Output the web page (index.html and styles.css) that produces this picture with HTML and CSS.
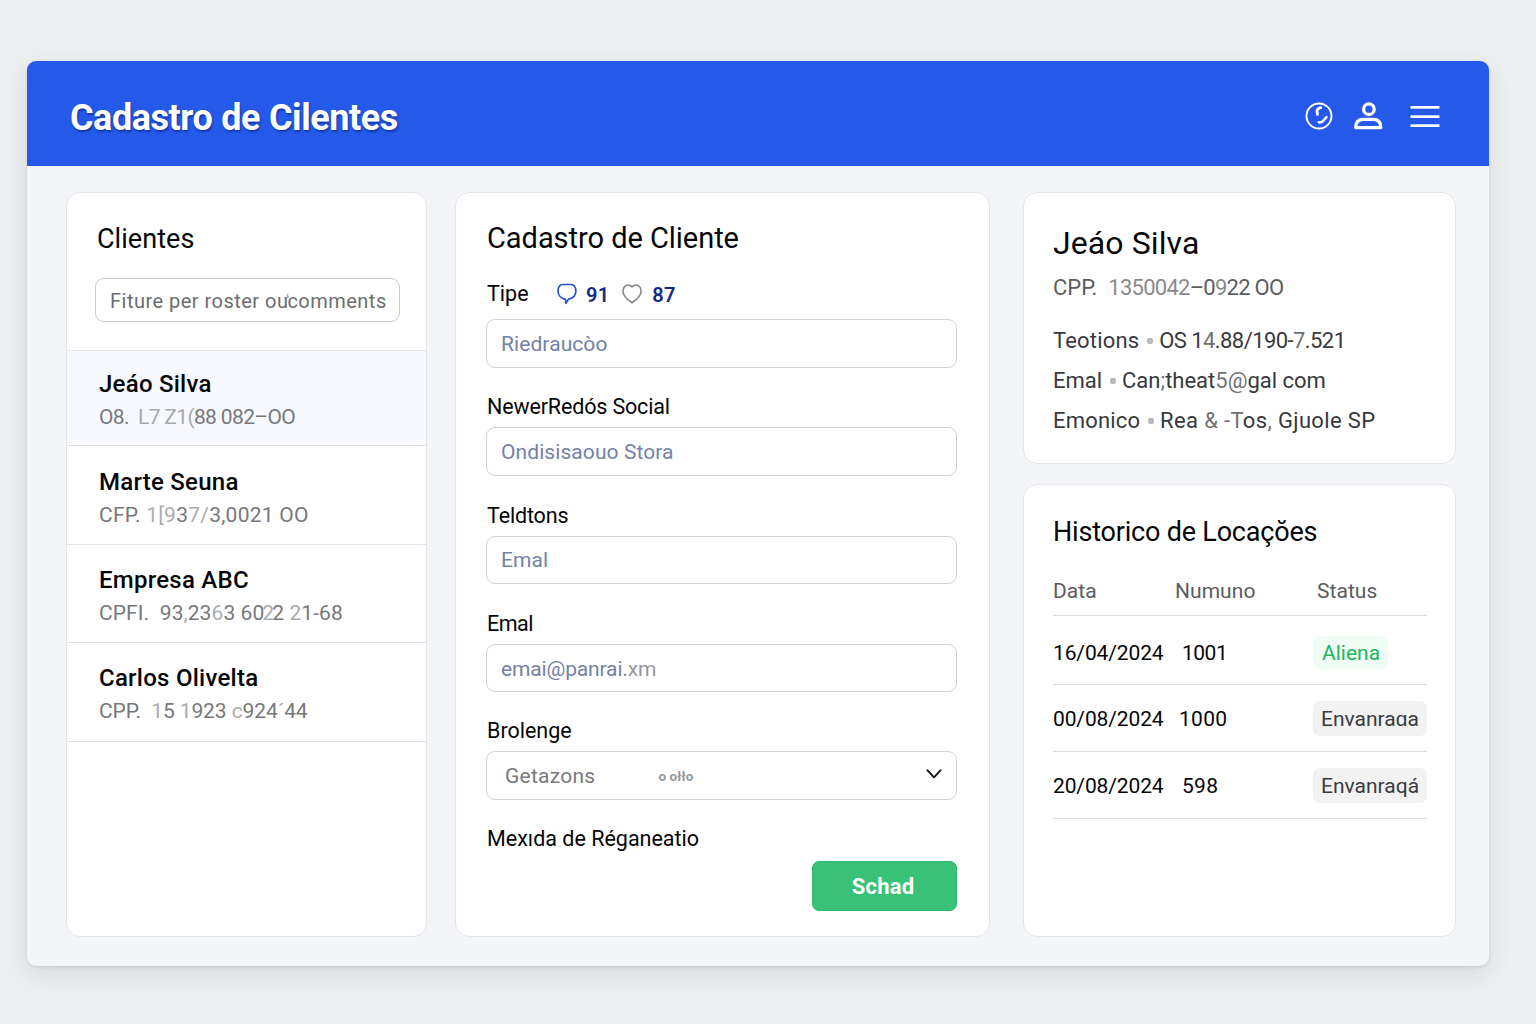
FILE: index.html
```html
<!DOCTYPE html>
<html lang="pt-BR">
<head>
<meta charset="utf-8">
<title>Cadastro de Cilentes</title>
<link rel="stylesheet" href="styles.css">
</head>
<body>
<div class="app">
  <header class="topbar">
    <h1 class="topbar-title">Cadastro de Cilentes</h1>
    <nav class="topbar-actions">
      <svg class="icon-clock" width="28" height="28" viewBox="0 0 28 28" fill="none" stroke="#fff" stroke-linecap="round" stroke-linejoin="round">
        <circle cx="14" cy="14" r="12.500" stroke-width="1.900"/>
        <path d="M15.600 5.700c-2.800.6-4 2.400-3.500 4.300l.4 2.300" stroke-width="2.900"/>
        <path d="M13.800 20.300c2.600.4 4.100-.7 5-2.200l2.700-3" stroke-width="2.500"/>
      </svg>
      <svg class="icon-user" width="29" height="28" viewBox="0 0 29 28" fill="none" stroke="#fff" stroke-width="3.300">
        <circle cx="14.900" cy="7.200" r="5.300"/>
        <path d="M1.700 25.600c0-5.200 2.800-8.200 7.600-8.200h9.900c4.800 0 7.600 3 7.600 8.200z" stroke-linejoin="round"/>
      </svg>
      <svg class="icon-menu" width="30" height="24" viewBox="0 0 30 24" fill="#fff">
        <rect x="0.500" y="1" width="29" height="2.700"/>
        <rect x="0.500" y="10.300" width="29" height="2.700"/>
        <rect x="0.500" y="19.300" width="29" height="2.700"/>
      </svg>
    </nav>
  </header>

  <main class="content">
    <section class="card clients">
      <h2 class="clients-title">Clientes</h2>
      <div class="search"><span>Fiture per roster ou<span class="faint tight">ʻ</span>comments</span></div>
      <ul class="client-list">
        <li class="client client--active">
          <strong>Jeáo Silva</strong>
          <span class="doc doc--narrow">O8.&nbsp; <span class="faint">L7 Z1(</span>88 082–OO</span>
        </li>
        <li class="client client--second">
          <strong>Marte Seuna</strong>
          <span class="doc doc--wide">CFP. <span class="faint">1[9</span>3<span class="faint">7/</span>3,0021 OO</span>
        </li>
        <li class="client client--third">
          <strong>Empresa ABC</strong>
          <span class="doc doc--company">CPFI.&nbsp; 93<span class="faint">,</span>23<span class="faint">6</span>3 60<span class="faint overlap">2</span>2 <span class="faint">2</span>1-68</span>
        </li>
        <li class="client client--last">
          <strong>Carlos Olivelta</strong>
          <span class="doc">CPP.&nbsp; <span class="faint">1</span>5 <span class="faint">1</span>923 <span class="faint">c</span>924<span class="faint">´</span>44</span>
        </li>
      </ul>
    </section>

    <section class="card register">
      <h2 class="register-title">Cadastro de Cliente</h2>
      <div class="type-row">
        <span class="label label--type">Tipe</span>
        <svg class="icon-bubble" width="20" height="22" viewBox="0 0 20 22" fill="none" stroke="#2352cf" stroke-width="1.700" stroke-linejoin="round">
          <path d="M5.800 1.500h8.200c2.800 0 4.900 2.800 4.900 6.300 0 4.600-3.200 7.600-7.400 8.300L8.900 20.400l-.5-4.100C4 15.600 1 12.400 1 8.100c0-4 2-6.600 4.800-6.600z"/>
        </svg>
        <span class="count">91</span>
        <svg class="icon-heart" width="20" height="20" viewBox="0 0 20 20" fill="none" stroke="#8a8c90" stroke-width="1.700" stroke-linejoin="round">
          <path d="M10 18.700C5.500 15.800 1 12.200 1 7.200 1 3.700 3 1.200 6 1.200c1.900 0 3.200.7 4 1.700.8-1 2.100-1.700 4-1.700 3 0 5 2.500 5 6 0 5-4.500 8.600-9 11.500z"/>
        </svg>
        <span class="count">87</span>
      </div>
      <div class="input input--tall">Riedraucòo</div>

      <div class="field field--near">
        <span class="label label--company">NewerRedós Social</span>
        <div class="input input--tall">Ondisisaouo Stora</div>
      </div>
      <div class="field">
        <span class="label label--phone">Teldtons</span>
        <div class="input">Emal</div>
      </div>
      <div class="field">
        <span class="label label--email">Emal</span>
        <div class="input input--email">emai@panrai.<span class="gray">xm</span></div>
      </div>
      <div class="field field--near">
        <span class="label">Brolenge</span>
        <div class="input input--tall select">
          <span class="select-value">Getazons</span>
          <span class="select-note">o ołło</span>
          <svg width="16" height="10" viewBox="0 0 16 10" fill="none" stroke="#16181c" stroke-width="1.900" stroke-linecap="round" stroke-linejoin="round"><path d="M1.500 1.300 8 8.300l6.500-7"/></svg>
        </div>
      </div>
      <div class="field field--near">
        <span class="label">Mexıda de Réganeatio</span>
      </div>
      <button class="submit" type="button">Schad</button>
    </section>

    <div class="side">
      <section class="card profile">
        <h2 class="profile-name">Jeáo Silva</h2>
        <p class="profile-doc">CPP.&nbsp; <span class="profile-num"><span class="soft">1350042</span>–0<span class="soft">9</span>22 OO</span></p>
        <p><span class="term">Teotions</span> <i class="dot"></i> <span class="phone">OS 1<span class="soft">4</span>.88/190-<span class="soft">7</span>.521</span></p>
        <p>Emal <i class="dot"></i> Can<span class="soft">;</span>theat<span class="soft">5@</span>gal com</p>
        <p><span class="term">Emonico</span> <i class="dot"></i> <span class="address">Rea <span class="soft">&amp; -T</span>os<span class="soft">,</span> Gjuole SP</span></p>
      </section>

      <section class="card history">
        <h2 class="history-title">Historico de Locaçŏes</h2>
        <div class="row row--head">
          <span>Data</span><span>Numuno</span><span>Status</span>
        </div>
        <div class="row row--first">
          <span>16/04/2024</span><span class="num--in num--short">1001</span><span><span class="badge badge--green">Aliena</span></span>
        </div>
        <div class="row">
          <span>00/08/2024</span><span class="num">1000</span><span><span class="badge">Envanraɑa</span></span>
        </div>
        <div class="row">
          <span>20/08/2024</span><span class="num num--in">598</span><span><span class="badge">Envanraqá</span></span>
        </div>
      </section>
    </div>
  </main>
</div>
</body>
</html>
```
FILE: styles.css
```css
* { box-sizing: border-box; }

body {
  margin: 0;
  height: 1024px;
  padding: 61px 46px 57px 27px;
  overflow: hidden;
  background: #eeeff1;
  font-family: Roboto, "Liberation Sans", sans-serif;
  color: #060607;
}

h1, h2, p, ul { margin: 0; padding: 0; font-weight: 400; }

.app {
  width: 1462px;
  height: 905px;
  border-radius: 9px;
  overflow: hidden;
  background: #f4f5f8;
  box-shadow: 0 8px 24px rgba(60, 64, 72, .13), 0 1px 3px rgba(60, 64, 72, .14);
}

.topbar {
  height: 105px;
  padding: 0 49px 0 43px;
  display: flex;
  align-items: center;
  justify-content: space-between;
  background: #2459ea;
}
.topbar-title {
  padding-top: 8px;
  color: #fff;
  font-size: 36px;
  line-height: 44px;
  font-weight: 700;
  letter-spacing: -.45px;
  word-spacing: .4px;
  white-space: nowrap;
  text-shadow: 1px 2px 2px rgba(10, 30, 110, .55);
}
.topbar-actions { display: flex; align-items: center; padding-top: 4px; }
.icon-clock { margin-right: 21px; }
.icon-user { margin-right: 27px; }
.icon-menu { margin-top: 2px; }

.content { padding: 26px 0 0 39px; display: flex; align-items: flex-start; }

.card {
  background: #fff;
  border: 1px solid #e3e5e9;
  border-radius: 14px;
  white-space: nowrap;
}

/* Client list */
.clients { width: 361px; height: 745px; margin-right: 28px; }
.clients-title { margin: 26px 0 0 30px; font-size: 27px; line-height: 40px; letter-spacing: .05px; }
.search {
  width: 305px;
  height: 44px;
  margin: 19px 0 0 28px;
  padding: 1px 0 0 14px;
  display: flex;
  align-items: center;
  border: 1px solid #c9cbcf;
  border-radius: 9px;
  color: #6c6d70;
  font-size: 20px;
  letter-spacing: .48px;
}
.faint { opacity: .62; }
.tight { margin: 0 -3px; }
.overlap { margin: 0 -2px; }
.client-list { list-style: none; margin-top: 28px; border-top: 1px solid #e3e5e9; }
.client { height: 98px; padding: 19px 0 0 32px; border-bottom: 1px solid #e0e2e6; }
.client--active { height: 95px; padding-top: 17px; background: #f8f9fe; }
.client--second { height: 99px; padding-top: 20px; }
.client--last { height: 99px; }
.client strong { display: block; font-weight: 500; font-size: 24px; line-height: 32px; letter-spacing: .25px; }
.doc { display: block; margin-top: 2px; font-size: 21px; line-height: 30px; letter-spacing: -.1px; color: #77787b; }
.doc--narrow { letter-spacing: -.65px; }
.doc--wide { letter-spacing: .25px; }
.doc--company { letter-spacing: .08px; }

/* Registration form */
.register { width: 535px; height: 745px; margin-right: 33px; padding: 25px 32px 0 30px; }
.register-title { padding-left: 1px; font-size: 29px; line-height: 40px; letter-spacing: -.04px; }
.type-row { display: flex; align-items: center; height: 30px; margin: 20px 0 11px; }
.label { display: block; height: 30px; padding-left: 1px; font-size: 21.5px; line-height: 32px; }
.label--company { letter-spacing: -.15px; }
.label--phone { letter-spacing: -.15px; }
.label--email { letter-spacing: -.5px; }
.label--type { width: 43px; }
.icon-bubble { margin: 2px 9px 0 28px; }
.icon-heart { margin: 1px 10px 0 13px; }
.count { margin-top: 3px; color: #14288a; font-size: 20px; font-weight: 600; letter-spacing: .2px; }
.input {
  height: 48px;
  margin-top: 6px;
  padding-left: 14px;
  display: flex;
  align-items: center;
  border: 1px solid #cfd1d5;
  border-radius: 9px;
  color: #7481a8;
  font-size: 21px;
  letter-spacing: .08px;
}
.input--tall { height: 49px; }
.input--email { padding-top: 2px; letter-spacing: -.15px; }
.field { margin-top: 24px; }
.field--near { margin-top: 23px; }
.gray { color: #96989f; }
.select { padding: 0 14px 0 18px; }
.select svg { margin-bottom: 4px; }
.select-value { color: #77797d; letter-spacing: .25px; }
.select-note { margin: 0 auto 0 63px; color: #97989b; font-size: 13.5px; font-weight: 700; }
.submit {
  display: block;
  width: 145px;
  height: 50px;
  margin: 8px 0 0 auto;
  padding: 1px 9px 0 6px;
  border: 1px solid #2dbb68;
  border-radius: 7px;
  background: #39c277;
  color: #fff;
  font: 700 22px Roboto, sans-serif;
  letter-spacing: .2px;
}

/* Customer details */
.side { display: flex; flex-direction: column; gap: 20px; }
.profile { width: 433px; height: 272px; padding: 28px 0 0 29px; }
.profile-name { font-size: 32px; line-height: 44px; letter-spacing: .1px; }
.profile p { font-size: 22px; line-height: 40px; color: #38393c; }
.profile .profile-doc { margin: 3px 0 13px; line-height: 40px; color: #5c5d60; }
.profile-num { letter-spacing: -.75px; }
.term { letter-spacing: .18px; }
.phone { letter-spacing: -.57px; }
.address { letter-spacing: .35px; }
.soft { opacity: .72; }
.dot {
  display: inline-block;
  width: 6px;
  height: 6px;
  margin: 0 1px 4px 2px;
  border-radius: 2px;
  background: #b9babd;
  vertical-align: baseline;
}

/* Rental history */
.history { width: 433px; height: 453px; padding: 27px 28px 0 29px; }
.history-title { font-size: 27px; line-height: 40px; letter-spacing: -.2px; }
.row {
  display: grid;
  grid-template-columns: 126px 134px 1fr;
  align-items: center;
  height: 67px;
  padding-top: 1px;
  border-bottom: 1px solid #dcdee1;
  font-size: 21px;
  letter-spacing: -.12px;
}
.row--first { height: 69px; padding-top: 5px; }
.row--head { grid-template-columns: 122px 142px 1fr; height: 64px; padding-top: 14px; color: #5b5c5f; letter-spacing: .05px; }
.num { letter-spacing: .3px; }
.num--in { padding-left: 3px; }
.num--short { letter-spacing: -.5px; }
.badge {
  display: inline-flex;
  align-items: center;
  height: 35px;
  padding: 0 8px;
  border-radius: 7px;
  background: #f2f2f3;
  color: #3a3b3e;
  font-size: 21px;
  letter-spacing: 0;
}
.badge--green { height: 33px; padding: 0 8px 0 9px; background: #effdf4; color: #22b55f; }
```
